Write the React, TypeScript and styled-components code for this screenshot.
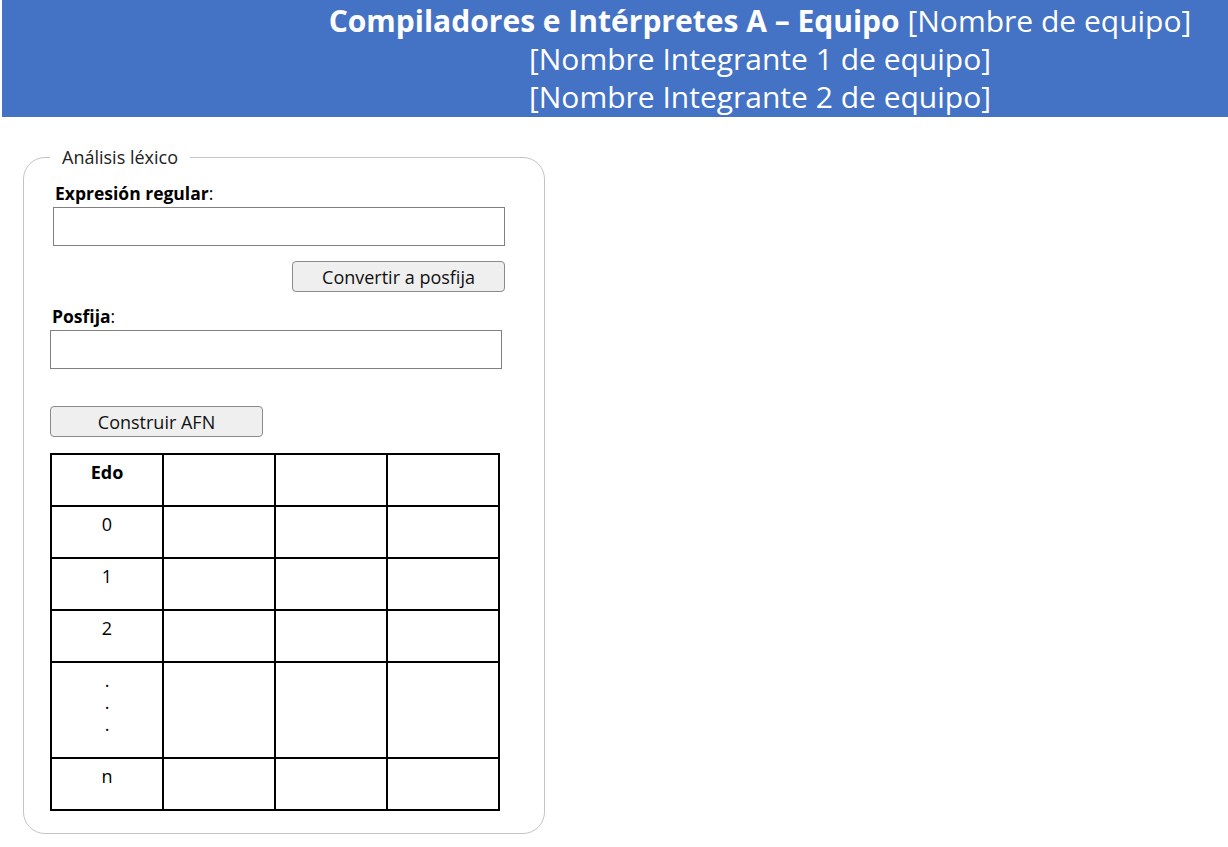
import React from "react";
import styled, { createGlobalStyle } from "styled-components";

const Global = createGlobalStyle`
  html, body { margin: 0; padding: 0; background: #fff; }
  body { font-family: "Open Sans", "Noto Sans", sans-serif; color: #000; }
`;

const Header = styled.header`
  margin-left: 2px;
  height: 117px;
  background: #4472c4;
  color: #fff;
  padding-left: 290px;
  display: flex;
  flex-direction: column;
  align-items: center;
  font-size: 30px;
  line-height: 38px;
  padding-top: 2px;
  box-sizing: border-box;
`;

const HeaderLine = styled.div`
  white-space: nowrap;
`;

const Strong = styled.strong`
  font-weight: 700;
`;

const Main = styled.main`
  padding: 30px 0 0 23px;
`;

const Fieldset = styled.fieldset`
  margin: 0;
  width: 522px;
  min-width: 0;
  box-sizing: border-box;
  border: 1px solid #c4c4c4;
  border-radius: 22px;
  padding: 14px 26px 22px 26px;
`;

const Legend = styled.legend`
  margin-left: 0;
  padding: 0 12px;
  font-size: 18px;
  line-height: 20px;
  color: #222;
`;

const Group = styled.div<{ $shift: number }>`
  display: flex;
  flex-direction: column;
  margin-left: ${(p) => p.$shift}px;
  width: 452px;
`;

const Spacer = styled.div<{ $h: number }>`
  height: ${(p) => p.$h}px;
`;

const Label = styled.label`
  font-size: 17.5px;
  line-height: 24px;
  margin-left: 2px;
  b { font-weight: 700; }
`;

const Input = styled.input`
  box-sizing: border-box;
  width: 452px;
  height: 39px;
  margin-top: 2px;
  border: 1px solid #808080;
  border-radius: 0;
  font-family: inherit;
  font-size: 16px;
  padding: 0 6px;
`;

const Button = styled.button<{ $right?: boolean }>`
  box-sizing: border-box;
  width: 213px;
  height: 31px;
  align-self: ${(p) => (p.$right ? "flex-end" : "flex-start")};
  background: #efefef;
  border: 1px solid #8a8a8a;
  border-radius: 4px;
  font-family: inherit;
  font-size: 18px;
  color: #111;
  padding: 0;
`;

const Table = styled.table`
  border-collapse: collapse;
  margin-top: 16px;
  table-layout: fixed;
  width: 450px;
`;

const Cell = styled.td<{ $head?: boolean }>`
  border: 2px solid #000;
  padding: 6px 4px 22px;
  line-height: 22px;
  font-size: 18px;
  text-align: center;
  vertical-align: top;
  font-weight: ${(p) => (p.$head ? 700 : 400)};
`;

const rows: React.ReactNode[] = [
  "0",
  "1",
  "2",
  <>
    .<br />.<br />.
  </>,
  "n",
];

export default function App() {
  return (
    <>
      <Global />
      <Header>
        <HeaderLine>
          <Strong>Compiladores e Intérpretes A – Equipo</Strong> [Nombre de equipo]
        </HeaderLine>
        <HeaderLine>[Nombre Integrante 1 de equipo]</HeaderLine>
        <HeaderLine>[Nombre Integrante 2 de equipo]</HeaderLine>
      </Header>
      <Main>
        <Fieldset>
          <Legend>Análisis léxico</Legend>
          <Group $shift={3}>
            <Label>
              <b>Expresión regular</b>:
            </Label>
            <Input type="text" />
            <Spacer $h={15} />
            <Button $right>Convertir a posfija</Button>
          </Group>
          <Group $shift={0}>
            <Spacer $h={12} />
            <Label>
              <b>Posfija</b>:
            </Label>
            <Input type="text" />
            <Spacer $h={37} />
            <Button>Construir AFN</Button>
          </Group>
          <Table>
            <tbody>
              <tr>
                <Cell $head>Edo</Cell>
                <Cell />
                <Cell />
                <Cell />
              </tr>
              {rows.map((r, i) => (
                <tr key={i}>
                  <Cell>{r}</Cell>
                  <Cell />
                  <Cell />
                  <Cell />
                </tr>
              ))}
            </tbody>
          </Table>
        </Fieldset>
      </Main>
    </>
  );
}
